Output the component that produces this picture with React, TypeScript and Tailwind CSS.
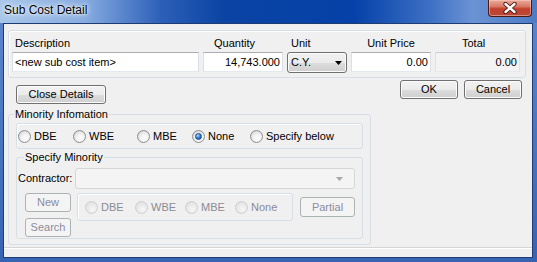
import React from 'react';

const btn =
  'flex items-center justify-center rounded-[3px] border border-[#707070] bg-[linear-gradient(#f2f2f2_0%,#ebebeb_50%,#dddddd_50%,#cfcfcf_100%)] shadow-[inset_0_0_0_1px_#fbfbfb] text-black leading-none';
const btnOff =
  'flex items-center justify-center rounded-[3px] border border-[#adb2b5] bg-[#f4f4f4] text-[#8c8ca0] leading-none';
const box = 'rounded-[3px] border border-[#d5dfe5] shadow-[inset_1px_1px_0_#ffffff]';
const field =
  'h-[20px] border border-[#abadb3] border-x-[#dbdfe6] border-b-[#e3e9ef] px-[2px] outline-none text-black';

const Radio: React.FC<{ label: string; checked?: boolean; disabled?: boolean; w?: string }> = ({
  label,
  checked,
  disabled,
  w,
}) => (
  <div className={`flex items-center gap-[3px] ${w ?? ''}`}>
    <span
      className={
        disabled
          ? 'flex h-[13px] w-[13px] items-center justify-center rounded-full border border-[#cfcfcf] bg-[radial-gradient(circle_at_60%_65%,#f7f7f7_0%,#e6e6e6_60%,#d6d6d6_100%)]'
          : 'flex h-[13px] w-[13px] items-center justify-center rounded-full border border-[#8e8f8f] bg-[radial-gradient(circle_at_60%_65%,#ffffff_0%,#f0f0f0_45%,#c6c6c6_100%)]'
      }
    >
      {checked && (
        <span className="h-[7px] w-[7px] rounded-full border border-[#1a4b91] bg-[radial-gradient(circle_at_35%_30%,#b7e0ff_0%,#3b85d6_45%,#0d3f8a_100%)]" />
      )}
    </span>
    <span className={disabled ? 'text-[#8b8b96]' : 'text-black'}>{label}</span>
  </div>
);

export default function App() {
  return (
    <div className="flex h-[262px] w-[537px] flex-col bg-[linear-gradient(#5d88cf,#3763b3)] font-['Liberation_Sans',Arial,sans-serif] text-[11px] leading-[13px]">
      {/* title bar */}
      <div className="flex h-[23px] items-start justify-between bg-[linear-gradient(90deg,#a9c6ea_0%,#86abe0_16%,#2c5fb8_30%,#0a43a3_42%,#0541a8_66%,#3d70c4_80%,#6a93d4_88%,#4d7bc4_100%)]">
        <span className="ml-[4px] mt-[3px] text-[12px] leading-[14px] text-black [text-shadow:0_0_8px_#ffffff,0_0_4px_#e8f1ff,0_0_2px_#ffffff]">
          Sub Cost Detail
        </span>
        <div className="mr-[5px] flex h-[17px] w-[44px] items-center justify-center rounded-b-[4px] border border-t-0 border-[#4e1710] bg-[linear-gradient(#e9aa9c_0%,#d97a66_40%,#c2402e_55%,#b8483a_100%)] shadow-[inset_0_0_0_1px_rgba(255,210,200,0.5)]">
          <svg width="14" height="12" viewBox="0 0 14 12">
            <path d="M2.5 2 L11.5 10 M11.5 2 L2.5 10" stroke="#4a1510" strokeWidth="4.2" strokeLinecap="round" />
            <path d="M2.5 2 L11.5 10 M11.5 2 L2.5 10" stroke="#ffffff" strokeWidth="2.4" strokeLinecap="round" />
          </svg>
        </div>
      </div>

      {/* client */}
      <div className="mb-[4px] ml-[3px] mr-[4px] flex flex-1 flex-col border border-[#1c3c74] bg-[#f0f0f0]">
        {/* item line */}
        <div className={`ml-[4px] mt-[6px] h-[48px] w-[518px] pl-[3px] ${box}`}>
          <div className="flex pt-[6px] text-black">
            <div className="w-[187px] pl-[3px]">Description</div>
            <div className="ml-[4px] w-[80px] pl-[11px]">Quantity</div>
            <div className="ml-[4px] w-[60px] pl-[4px]">Unit</div>
            <div className="ml-[4px] w-[80px] text-center">Unit Price</div>
            <div className="ml-[4px] w-[85px] pl-[27px]">Total</div>
          </div>
          <div className="mt-[2px] flex items-start">
            <input readOnly value="<new sub cost item>" className={`w-[187px] bg-white ${field}`} />
            <input readOnly value="14,743.000" className={`ml-[4px] w-[80px] bg-white text-right ${field}`} />
            <div className="ml-[4px] flex h-[21px] w-[60px] items-center justify-between rounded-[3px] border border-[#707070] bg-[linear-gradient(#f2f2f2_0%,#ebebeb_50%,#dddddd_50%,#cfcfcf_100%)] pl-[3px] pr-[4px] text-black shadow-[inset_0_0_0_1px_#fbfbfb]">
              <span>C.Y.</span>
              <svg width="7" height="4" viewBox="0 0 7 4">
                <polygon points="0,0 7,0 3.5,4" fill="#000" />
              </svg>
            </div>
            <input readOnly value="0.00" className={`ml-[4px] w-[80px] bg-white text-right ${field}`} />
            <input
              readOnly
              value="0.00"
              className="ml-[4px] h-[20px] w-[85px] border border-[#c9ccd2] border-x-[#e0e2e6] border-b-[#e6e8ec] bg-[#f3f3f3] px-[2px] text-right text-black outline-none"
            />
          </div>
        </div>

        {/* buttons */}
        <div className="mt-[2px] flex items-start justify-between">
          <button className={`ml-[12px] mt-[5px] h-[19px] w-[90px] ${btn}`}>Close Details</button>
          <div className="mr-[10px] flex gap-[6px]">
            <button className={`h-[19px] w-[58px] ${btn}`}>OK</button>
            <button className={`h-[19px] w-[58px] ${btn}`}>Cancel</button>
          </div>
        </div>

        {/* minority information */}
        <fieldset className="ml-[4px] mt-[4px] h-[137px] w-[363px] min-w-0 rounded-[3px] border border-[#d5dfe5]">
          <legend className="ml-[5px] px-[1px] text-black">Minority Infomation</legend>
          <div className={`ml-[7px] mt-[2px] flex h-[26px] w-[347px] items-center pl-[1px] pt-[1px] ${box}`}>
            <Radio label="DBE" w="w-[55px]" />
            <Radio label="WBE" w="w-[64px]" />
            <Radio label="MBE" w="w-[55px]" />
            <Radio label="None" checked w="w-[58px]" />
            <Radio label="Specify below" />
          </div>

          <fieldset className="ml-[7px] mt-[2px] h-[88px] w-[347px] min-w-0 rounded-[3px] border border-[#d5dfe5]">
            <legend className="ml-[7px] px-[1px] text-black">Specify Minority</legend>
            <div className="mt-[4px] flex items-center">
              <span className="ml-[1px] w-[57px] text-black">Contractor:</span>
              <div className="flex h-[21px] w-[280px] items-center justify-end rounded-[3px] border border-[#d6d6d6] bg-[#f4f4f4] pr-[11px]">
                <svg width="7" height="4" viewBox="0 0 7 4">
                  <polygon points="0,0 7,0 3.5,4" fill="#a8a8a8" />
                </svg>
              </div>
            </div>
            <div className="mt-[4px] flex items-start">
              <div className="ml-[8px] flex flex-col gap-[6px]">
                <button className={`h-[19px] w-[46px] ${btnOff}`}>New</button>
                <button className={`h-[19px] w-[46px] ${btnOff}`}>Search</button>
              </div>
              <div className={`ml-[6px] flex h-[28px] w-[216px] items-center pl-[7px] ${box}`}>
                <Radio label="DBE" disabled w="w-[50px]" />
                <Radio label="WBE" disabled w="w-[50px]" />
                <Radio label="MBE" disabled w="w-[50px]" />
                <Radio label="None" disabled />
              </div>
              <button className={`ml-[7px] mt-[4px] h-[20px] w-[55px] ${btnOff}`}>Partial</button>
            </div>
          </fieldset>
        </fieldset>

        {/* status strip */}
        <div className="mt-auto h-[10px] border-t border-[#d5d5d5] shadow-[inset_0_1px_0_#ffffff]" />
      </div>
    </div>
  );
}
